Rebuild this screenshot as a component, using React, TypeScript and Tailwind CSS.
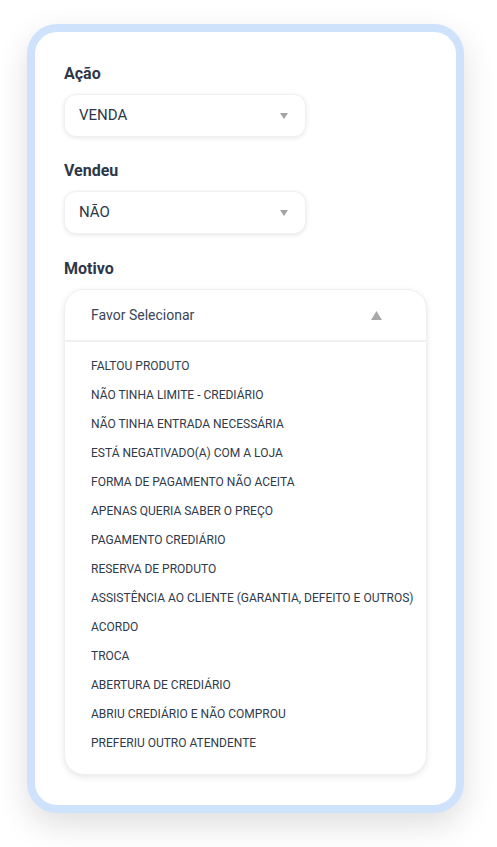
const MOTIVOS = [
  "FALTOU PRODUTO",
  "NÃO TINHA LIMITE - CREDIÁRIO",
  "NÃO TINHA ENTRADA NECESSÁRIA",
  "ESTÁ NEGATIVADO(A) COM A LOJA",
  "FORMA DE PAGAMENTO NÃO ACEITA",
  "APENAS QUERIA SABER O PREÇO",
  "PAGAMENTO CREDIÁRIO",
  "RESERVA DE PRODUTO",
  "ASSISTÊNCIA AO CLIENTE (GARANTIA, DEFEITO E OUTROS)",
  "ACORDO",
  "TROCA",
  "ABERTURA DE CREDIÁRIO",
  "ABRIU CREDIÁRIO E NÃO COMPROU",
  "PREFERIU OUTRO ATENDENTE",
];

function Caret({ up = false }: { up?: boolean }) {
  // small filled triangle used by the selects
  return up ? (
    <svg width="11" height="9" viewBox="0 0 11 9">
      <path d="M5.5 0 L11 9 L0 9 Z" fill="#a8a8a8" />
    </svg>
  ) : (
    <svg width="8" height="6" viewBox="0 0 8 6">
      <path d="M0 0 L8 0 L4 6 Z" fill="#a3a3a3" />
    </svg>
  );
}

function Field({ label, value }: { label: string; value: string }) {
  return (
    <div className="flex flex-col">
      <label className="text-[16px] leading-5 font-bold text-[#2d3748]">{label}</label>
      <div className="mt-[10px] flex h-[43px] w-[242px] items-center justify-between rounded-xl border border-[#f1f1f1] bg-white pl-[14px] pr-[17px] shadow-[0_1px_4px_rgba(0,0,0,0.1)]">
        <span className="text-[15px] text-[#2d3748]">{value}</span>
        <Caret />
      </div>
    </div>
  );
}

export default function App() {
  return (
    <div className="min-h-screen bg-white" style={{ fontFamily: "Roboto, 'Liberation Sans', sans-serif" }}>
      <div className="ml-[27px] pt-[24px]">
        <div className="w-[437px] rounded-[30px] border-8 border-[#cfe2fc] bg-white px-[29px] pt-[32px] pb-[30px] shadow-[0_12px_32px_rgba(0,0,0,0.13)]">
          <Field label="Ação" value="VENDA" />
          <div className="mt-6">
            <Field label="Vendeu" value="NÃO" />
          </div>

          {/* Motivo - open dropdown */}
          <div className="mt-[25px] flex flex-col">
            <label className="text-[16px] leading-5 font-bold text-[#2d3748]">Motivo</label>
            <div className="mt-[10px] rounded-[20px] border border-[#f0f0f0] bg-white shadow-[0_2px_6px_rgba(0,0,0,0.1)]">
              <div className="flex h-[52px] items-center justify-between border-b-2 border-[#f0f0f0] pl-[26px] pr-[44px]">
                <span className="text-[14px] text-[#3a4556]">Favor Selecionar</span>
                <Caret up />
              </div>
              <ul className="pt-[10px] pb-[16px]">
                {MOTIVOS.map((m) => (
                  <li key={m} className="h-[29px] pl-[26px] text-[12px] leading-[29px] text-[#2f3a4b]">
                    {m}
                  </li>
                ))}
              </ul>
            </div>
          </div>
        </div>
      </div>
    </div>
  );
}
